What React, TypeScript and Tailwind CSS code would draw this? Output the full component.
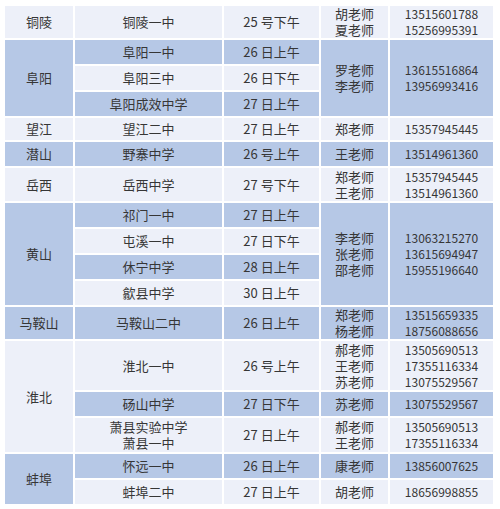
type Cell = { text: string; dark?: boolean; span?: string; small?: boolean };

const D = true;

// cells listed in table order; grid auto-placement fills around the row spans
const cells: Cell[] = [
  // 铜陵
  { text: "铜陵" },
  { text: "铜陵一中" },
  { text: "25 号下午" },
  { text: "胡老师\n夏老师" },
  { text: "13515601788\n15256995391", small: true },
  // 阜阳
  { text: "阜阳", dark: D, span: "row-span-3" },
  { text: "阜阳一中", dark: D },
  { text: "26 日上午", dark: D },
  { text: "罗老师\n李老师", dark: D, span: "row-span-3" },
  { text: "13615516864\n13956993416", dark: D, span: "row-span-3", small: true },
  { text: "阜阳三中" },
  { text: "26 日下午" },
  { text: "阜阳成效中学", dark: D },
  { text: "27 日上午", dark: D },
  // 望江
  { text: "望江" },
  { text: "望江二中" },
  { text: "27 日上午" },
  { text: "郑老师" },
  { text: "15357945445", small: true },
  // 潜山
  { text: "潜山", dark: D },
  { text: "野寨中学", dark: D },
  { text: "26 号上午", dark: D },
  { text: "王老师", dark: D },
  { text: "13514961360", dark: D, small: true },
  // 岳西
  { text: "岳西" },
  { text: "岳西中学" },
  { text: "27 号下午" },
  { text: "郑老师\n王老师" },
  { text: "15357945445\n13514961360", small: true },
  // 黄山
  { text: "黄山", dark: D, span: "row-span-4" },
  { text: "祁门一中", dark: D },
  { text: "27 日上午", dark: D },
  { text: "李老师\n张老师\n邵老师", dark: D, span: "row-span-4" },
  { text: "13063215270\n13615694947\n15955196640", dark: D, span: "row-span-4", small: true },
  { text: "屯溪一中" },
  { text: "27 日下午" },
  { text: "休宁中学", dark: D },
  { text: "28 日上午", dark: D },
  { text: "歙县中学" },
  { text: "30 日上午" },
  // 马鞍山
  { text: "马鞍山", dark: D },
  { text: "马鞍山二中", dark: D },
  { text: "26 日上午", dark: D },
  { text: "郑老师\n杨老师", dark: D },
  { text: "13515659335\n18756088656", dark: D, small: true },
  // 淮北
  { text: "淮北", span: "row-span-3" },
  { text: "淮北一中" },
  { text: "26 号上午" },
  { text: "郝老师\n王老师\n苏老师" },
  { text: "13505690513\n17355116334\n13075529567", small: true },
  { text: "砀山中学", dark: D },
  { text: "27 日下午", dark: D },
  { text: "苏老师", dark: D },
  { text: "13075529567", dark: D, small: true },
  { text: "萧县实验中学\n萧县一中" },
  { text: "27 日上午" },
  { text: "郝老师\n王老师" },
  { text: "13505690513\n17355116334", small: true },
  // 蚌埠
  { text: "蚌埠", dark: D, span: "row-span-2" },
  { text: "怀远一中", dark: D },
  { text: "26 日上午", dark: D },
  { text: "康老师", dark: D },
  { text: "13856007625", dark: D, small: true },
  { text: "蚌埠二中" },
  { text: "27 日上午" },
  { text: "胡老师" },
  { text: "18656998855", small: true },
];

function TableCell({ cell }: { cell: Cell }) {
  return (
    <div
      className={`flex flex-col items-center justify-center text-center leading-[16px] ${cell.span ?? ""} ${
        cell.dark ? "bg-[#b6c8e6]" : "bg-[#edf0f9]"
      } ${cell.small ? "text-[12px]" : "text-[13px]"}`}
    >
      {cell.text.split("\n").map((line, i) => (
        <span key={i}>{line}</span>
      ))}
    </div>
  );
}

export default function App() {
  return (
    <div
      className="w-[500px] h-[509px] bg-white pt-[6px] pl-[5px] text-[#363636]"
      style={{ fontFamily: '"Noto Sans CJK SC", "Noto Sans", sans-serif' }}
    >
      <div className="grid grid-cols-[68px_147px_95px_67px_103px] grid-rows-[32px_24px_24px_24px_22px_24px_33px_24px_24px_24px_24px_32px_49px_24px_34px_24px_24px] gap-[2px]">
        {cells.map((c, i) => (
          <TableCell key={i} cell={c} />
        ))}
      </div>
    </div>
  );
}
